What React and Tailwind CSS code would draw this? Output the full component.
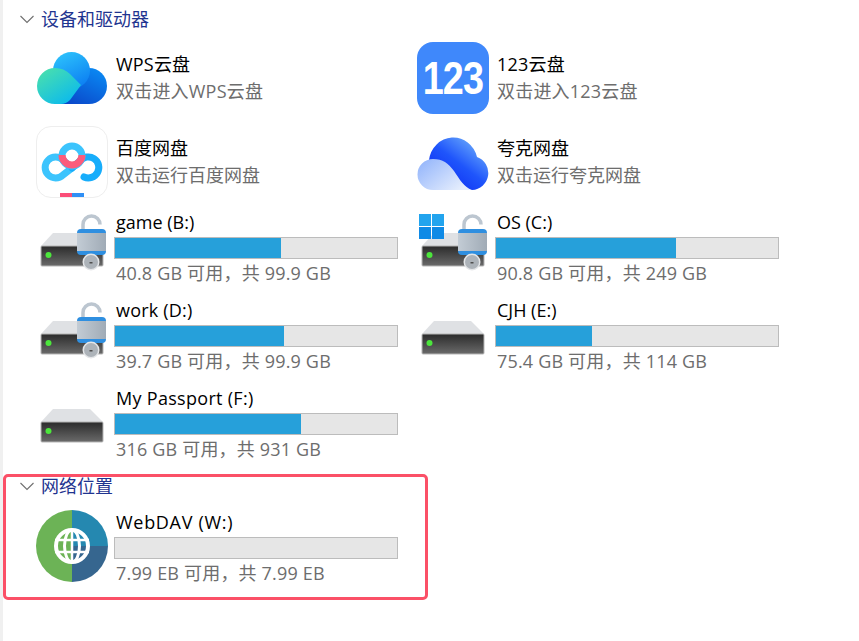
const fontClass = "font-['Open_Sans','Noto_Sans_CJK_SC',sans-serif]";

function Chevron() {
    return (
        <svg width="14" height="9" viewBox="0 0 14 9" fill="none" className="shrink-0">
            <path d="M0.5 1 L7 7.5 L13.5 1" stroke="#6f6f6f" strokeWidth="1.1" />
        </svg>
    );
}

function SectionHeader({ title, className }) {
    return (
        <div className={`flex items-center gap-[7px] ${className}`}>
            <Chevron />
            <span className="text-[18px] leading-6 text-[#1f3590]">{title}</span>
        </div>
    );
}

function WpsIcon() {
    return (
        <svg width="72" height="72" viewBox="36 42 72 72">
            <defs>
                <linearGradient id="wpsBack" x1="0.9" y1="0" x2="0.2" y2="1">
                    <stop offset="0" stopColor="#0a8cf5" />
                    <stop offset="1" stopColor="#0a45c8" />
                </linearGradient>
                <linearGradient id="wpsTop" x1="0.3" y1="0" x2="0.8" y2="1">
                    <stop offset="0" stopColor="#2cc0fb" />
                    <stop offset="1" stopColor="#0a7bf2" />
                </linearGradient>
                <linearGradient id="wpsGreen" x1="0" y1="0" x2="0.8" y2="1">
                    <stop offset="0" stopColor="#4fe3a8" />
                    <stop offset="1" stopColor="#08b8f0" />
                </linearGradient>
            </defs>
            <path d="M89 68 a18 18 0 0 1 0 36 H55 Z" fill="url(#wpsBack)" />
            <circle cx="71.500" cy="70.500" r="18.500" fill="url(#wpsTop)" />
            <path d="M55 68 a18 18 0 0 0 0 36 h6 q5 0 9 -4 L81 85 L70 74 q-6 -6 -15 -6 Z" fill="url(#wpsGreen)" />
        </svg>
    );
}

function BaiduIcon() {
    return (
        <div className="w-[72px] h-[72px] rounded-[15px] border border-[#eeeeee] bg-white">
            <svg width="70" height="70" viewBox="37 127 70 70">
                <g fill="none" strokeWidth="7" strokeLinecap="round">
                    <path d="M72 168 L63 175 A10.500 10.500 0 1 1 63 160 L72 168" stroke="#3cc4fd" />
                    <path d="M72 168 L80 161 A10.500 10.500 0 1 1 84 177" stroke="#17adfb" />
                    <circle cx="72" cy="156" r="10" stroke="#3cc4fd" />
                    <path d="M62 155 A10 10 0 0 0 82 155" stroke="#fb5c7c" strokeLinecap="butt" />
                </g>
                <rect x="60" y="193" width="12" height="4" fill="#fb4d78" />
                <rect x="72" y="193" width="12" height="4" fill="#2f8ff5" />
            </svg>
        </div>
    );
}

function Pan123Icon() {
    return (
        <div className="w-[72px] h-[72px] rounded-[16px] bg-[#3f88fb] flex items-center justify-center">
            <span className="font-['Liberation_Sans',sans-serif] font-bold text-[46px] leading-none tracking-[-1px] text-white scale-x-[0.82]">123</span>
        </div>
    );
}

function QuarkIcon() {
    return (
        <svg width="72" height="72" viewBox="417 126 72 72">
            <defs>
                <linearGradient id="quarkBack" x1="0.9" y1="0.1" x2="0.3" y2="0.8">
                    <stop offset="0" stopColor="#6fb0fb" />
                    <stop offset="0.6" stopColor="#1f55fb" />
                    <stop offset="1" stopColor="#1238f5" />
                </linearGradient>
                <linearGradient id="quarkFront" x1="0" y1="0" x2="1" y2="0.7">
                    <stop offset="0" stopColor="#8fb2fb" />
                    <stop offset="1" stopColor="#e6eefd" />
                </linearGradient>
            </defs>
            <path d="M429 160 a24.500 26 0 0 1 48 -3 a17 17 0 0 1 -5 33 H440 Z" fill="url(#quarkBack)" />
            <path d="M433 159 c10 0 15 4 21 12 c6 9 10 16 18 19 H433 a15.500 15.500 0 0 1 0 -31 Z" fill="url(#quarkFront)" />
        </svg>
    );
}

function DriveIcon({ lock, windows }) {
    return (
        <svg width="72" height="72" viewBox="0 0 72 72">
            <defs>
                <linearGradient id="driveFront" x1="0" y1="0" x2="0" y2="1">
                    <stop offset="0" stopColor="#2b2b2b" />
                    <stop offset="1" stopColor="#6a6a6a" />
                </linearGradient>
                <linearGradient id="lockBody" x1="0" y1="0" x2="1" y2="0">
                    <stop offset="0" stopColor="#c3ccd5" />
                    <stop offset="1" stopColor="#a0abb6" />
                </linearGradient>
            </defs>
            <path d="M17 23 H54 L67 36 H5 Z" fill="#dfe1e4" />
            <rect x="5" y="36" width="62" height="20" rx="1" fill="url(#driveFront)" stroke="#b5b5b5" />
            <circle cx="12.500" cy="45" r="3" fill="#4ce63c" />
            {lock && (
                <g>
                    <path d="M47 20 V14.500 A8.500 8.500 0 0 1 64 14.500" fill="none" stroke="#bcc6d0" strokeWidth="3.500" />
                    <rect x="41" y="19" width="29" height="26" rx="4" fill="#2f8fe0" />
                    <rect x="41" y="23" width="29" height="18" fill="url(#lockBody)" />
                    <circle cx="55" cy="52" r="8.500" fill="#e4e6e8" />
                    <circle cx="55" cy="52" r="7" fill="#adb3b9" />
                    <rect x="53.500" y="52" width="3" height="1.500" fill="#4f4f4f" />
                </g>
            )}
            {windows && (
                <g fill="#0f8ae6">
                    <rect x="2" y="4" width="12" height="12" fill="#22a4ee" />
                    <rect x="15" y="4" width="12" height="12" fill="#22a4ee" />
                    <rect x="2" y="17" width="12" height="12" />
                    <rect x="15" y="17" width="12" height="12" />
                </g>
            )}
        </svg>
    );
}

function GlobeIcon() {
    return (
        <svg width="72" height="72" viewBox="0 0 72 72">
            <path d="M36 0 A36 36 0 0 0 36 72 Z" fill="#6cb356" />
            <path d="M36 0 A36 36 0 0 1 72 36 H36 Z" fill="#2588b0" />
            <path d="M72 36 A36 36 0 0 1 36 72 V36 Z" fill="#36668f" />
            <g fill="none" stroke="#ffffff">
                <circle cx="36" cy="36" r="16" strokeWidth="4" />
                <ellipse cx="36" cy="36" rx="7.500" ry="16" strokeWidth="3" />
                <path d="M36 19 V53 M19 30 H53 M19 42 H53" strokeWidth="2.500" />
            </g>
        </svg>
    );
}

function AppTile({ icon, name, hint, spacing = "" }) {
    return (
        <div className="flex gap-2">
            {icon}
            <div className="flex flex-col pt-[10px] gap-[3px]">
                <span className={`text-[18px] leading-6 text-black ${spacing}`}>{name}</span>
                <span className={`text-[18px] leading-6 text-[#6d6d6d] ${spacing}`}>{hint}</span>
            </div>
        </div>
    );
}

function DriveTile({ icon, name, used, detail, nameSpacing = "" }) {
    return (
        <div className="flex gap-[6px]">
            {icon}
            <div className="flex flex-col">
                <span className={`text-[18px] leading-6 text-black ml-[2px] ${nameSpacing}`}>{name}</span>
                <div className="mt-[3px] w-[284px] h-[22px] border border-[#bcbcbc] bg-[#e6e6e6]">
                    <div className="h-full bg-[#26a0da]" style={{ width: used }} />
                </div>
                <span className="text-[18px] leading-6 text-[#6d6d6d] ml-[2px] mt-[2px] tracking-[0.18px]">{detail}</span>
            </div>
        </div>
    );
}

export default function App() {
    return (
        <div className={`w-[859px] h-[641px] bg-white border-l-[3px] border-[#f0f0f0] ${fontClass}`}>
            <SectionHeader title="设备和驱动器" className="h-[38px] pl-[17px]" />
            <div className="mt-1 ml-[33px] grid grid-cols-[381px_381px] grid-rows-[84px_84px_88px_88px_88px]">
                <AppTile icon={<WpsIcon />} name="WPS云盘" hint="双击进入WPS云盘" spacing="tracking-[0.2px]" />
                <AppTile icon={<Pan123Icon />} name="123云盘" hint="双击进入123云盘" spacing="tracking-[0.2px]" />
                <AppTile icon={<BaiduIcon />} name="百度网盘" hint="双击运行百度网盘" />
                <AppTile icon={<QuarkIcon />} name="夸克网盘" hint="双击运行夸克网盘" />
                <DriveTile icon={<DriveIcon lock />} name="game (B:)" used="59%" detail="40.8 GB 可用，共 99.9 GB" />
                <DriveTile icon={<DriveIcon lock windows />} name="OS (C:)" used="64%" detail="90.8 GB 可用，共 249 GB" />
                <DriveTile icon={<DriveIcon lock />} name="work (D:)" used="60%" detail="39.7 GB 可用，共 99.9 GB" nameSpacing="tracking-[0.2px]" />
                <DriveTile icon={<DriveIcon />} name="CJH (E:)" used="34%" detail="75.4 GB 可用，共 114 GB" />
                <DriveTile icon={<DriveIcon />} name="My Passport (F:)" used="66%" detail="316 GB 可用，共 931 GB" nameSpacing="tracking-[0.3px]" />
            </div>
            <div className="w-[425px] h-[126px] border-[3px] border-[#fb5067] rounded-[5px]">
                <SectionHeader title="网络位置" className="h-[18px] pl-[14px]" />
                <div className="mt-[15px] ml-[30px]">
                    <DriveTile icon={<GlobeIcon />} name="WebDAV (W:)" used="0%" detail="7.99 EB 可用，共 7.99 EB" nameSpacing="tracking-[0.7px]" />
                </div>
            </div>
        </div>
    );
}
